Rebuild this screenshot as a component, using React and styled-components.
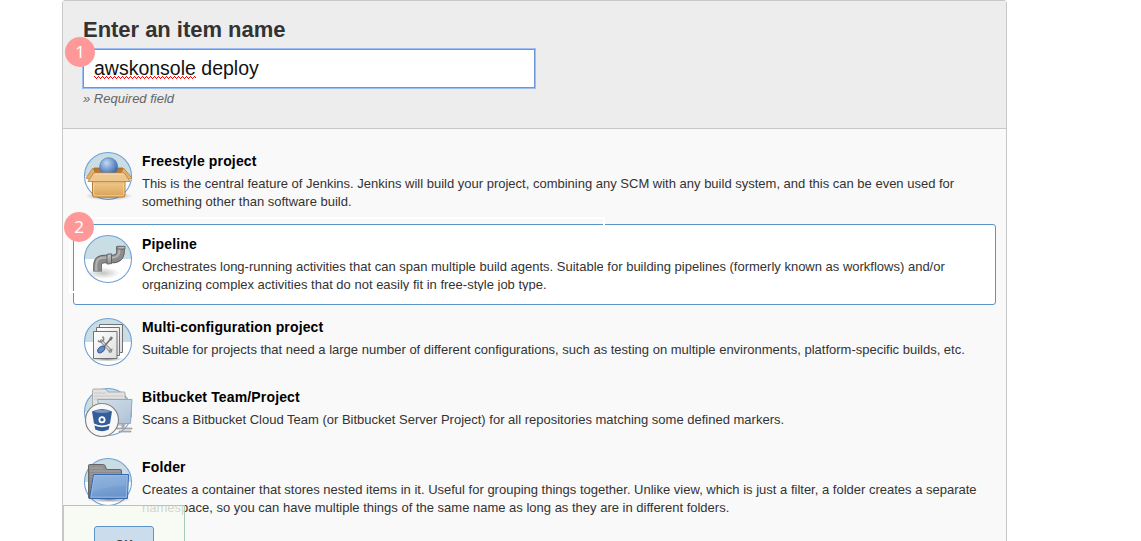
import React from 'react';
import styled, { createGlobalStyle, css } from 'styled-components';

const GlobalStyle = createGlobalStyle`
  * { box-sizing: border-box; }
  html, body { margin: 0; background: #fff; }
  body {
    height: 541px;
    overflow: hidden;
    font-family: "Liberation Sans", Arial, Helvetica, sans-serif;
    color: #333;
  }
`;

const Page = styled.main`
  height: 541px;
  overflow: hidden;
  padding-left: 62px;
`;

const Panel = styled.form`
  position: relative;
  width: 945px;
  height: 600px;
  border: 1px solid #c8c8c8;
  border-radius: 3px 3px 0 0;
  background: #f9f9f9;
`;

const Header = styled.header`
  height: 128px;
  padding: 16px 20px 0;
  background: #ededed;
  border-bottom: 1px solid #c8c8c8;
`;

const Title = styled.label`
  display: block;
  height: 32px;
  line-height: 26px;
  font-size: 22px;
  font-weight: 700;
  letter-spacing: -0.03px;
  color: #333;
`;

const NameField = styled.div`
  position: relative;
  width: 452px;
  height: 39px;
  padding-left: 10px;
  border: 1px solid #6f95d9;
  box-shadow: 0 0 0 1px #9cbff5;
  background: #fff;
  color: #111;
  font-size: 19.5px;
  line-height: 37px;
  white-space: nowrap;
`;

const Misspelled = styled.span`
  background-image:
    linear-gradient(90deg, #f00 1px, transparent 1px),
    linear-gradient(90deg, #f00 1px, transparent 1px),
    linear-gradient(90deg, #f00 1px, transparent 1px);
  background-repeat: repeat-x;
  background-size: 4px 1px, 2px 1px, 4px 1px;
  background-position: 0 calc(100% - 2px), 1px calc(100% - 1px), 2px 100%;
`;

const Hint = styled.div`
  padding: 3px 0 0 0;
  font-size: 13px;
  line-height: 15px;
  font-style: italic;
  color: #666;
`;

const List = styled.ul`
  display: flex;
  flex-direction: column;
  gap: 2px;
  margin: 0;
  padding: 12px 10px 0;
  list-style: none;
`;

const Item = styled.li`
  position: relative;
  display: flex;
  gap: 10px;
  height: ${(p) => (p.$tall ? 81 : 68)}px;
  padding: 10px 0 0 10px;
  border: 1px solid transparent;
  border-radius: 3px;
  ${(p) => p.$selected && css`
    border-color: #5c93c9;
    background: #fff;
  `}
`;

const Icon = styled.svg`
  flex: none;
  width: 48px;
  height: 48px;
  overflow: visible;
`;

const Name = styled.div`
  height: 23px;
  line-height: 18px;
  font-size: 14px;
  font-weight: 700;
  letter-spacing: 0.15px;
  color: #000;
  white-space: nowrap;
`;

const Desc = styled.div`
  line-height: 18px;
  font-size: 13px;
  color: #333;
  white-space: nowrap;
`;

const Badge = styled.span`
  position: absolute;
  z-index: 3;
  left: ${(p) => p.$x}px;
  top: ${(p) => p.$y}px;
  width: 30px;
  height: 30px;
  border-radius: 50%;
  background: #ff9999;
  color: #fff;
  font: 400 17px/29px "Open Sans", "Noto Sans", sans-serif;
  text-align: center;
`;

const Highlight = styled.span`
  position: absolute;
  z-index: 2;
  left: -5px;
  top: -8px;
  width: 536px;
  height: 76px;
  border: 2px solid #fff;
`;

const ButtonBar = styled.footer`
  position: absolute;
  z-index: 4;
  left: 0;
  top: 504px;
  width: 122px;
  height: 70px;
  padding: 20px 30px;
  border: 1px solid #a8ccb6;
  border-left-color: #b4d0be;
  background: rgba(247, 251, 242, 0.8);
`;

const OkButton = styled.button`
  display: block;
  width: 60px;
  height: 36px;
  padding: 0;
  border: 1px solid #5c93c9;
  border-radius: 3px;
  background: #cbdcec;
  color: #444;
  font: 700 12px/36px "Liberation Sans", Arial, sans-serif;
`;

const Disc = () => (
  <>
    <circle cx="24" cy="24" r="23.4" fill="#fff" />
    <path d="M.8 24a23.2 23.2 0 0 1 46.4 0z" fill="#c9dde5" />
    <circle cx="24" cy="24" r="23.5" fill="none" stroke="#6f9fd2" strokeWidth="1.1" />
  </>
);

const BoxIcon = () => (
  <Icon viewBox="0 0 48 48">
    <defs>
      <linearGradient id="card" x2="0" y2="1"><stop stopColor="#c99450" /><stop offset=".4" stopColor="#ecc382" /><stop offset="1" stopColor="#d8a256" /></linearGradient>
      <radialGradient id="ball" cx=".38" cy=".3" r=".75"><stop stopColor="#c3d9f2" /><stop offset=".55" stopColor="#6c95cb" /><stop offset="1" stopColor="#315f9f" /></radialGradient>
      <radialGradient id="shade"><stop stopColor="#444" stopOpacity=".65" /><stop offset="1" stopColor="#555" stopOpacity="0" /></radialGradient>
    </defs>
    <Disc />
    <ellipse cx="25" cy="44" rx="24" ry="4.500" fill="url(#shade)" />
    <path d="M10 16h29v9H10z" fill="#b47a35" stroke="#a06a2a" strokeWidth=".8" />
    <path d="M9 16 2 26l5 2 5-5zM39.500 16l8.500 10-5 2-7-5z" fill="#e2b26c" stroke="#b98239" strokeWidth=".8" strokeLinejoin="round" />
    <circle cx="24.700" cy="14.700" r="9" fill="url(#ball)" stroke="#4270ad" strokeWidth=".6" />
    <path d="M8.500 24h32.500v19q0 2-2 2H10.500q-2 0-2-2z" fill="url(#card)" stroke="#a97535" strokeWidth=".9" />
    <path d="M9.700 31v11.500q0 1.300 1.300 1.300h27.500q1.300 0 1.300-1.300V31" fill="none" stroke="#f5d7a4" strokeWidth=".8" />
    <path d="M9.500 21h31l5.500 8.500H4z" fill="#edc78f" stroke="#bd8945" strokeWidth=".9" strokeLinejoin="round" />
    <path d="M10.500 22h29" stroke="#fae3bd" />
  </Icon>
);

const PipeIcon = () => (
  <Icon viewBox="0 0 48 48">
    <defs>
      <linearGradient id="pipe" x2=".6" y2="1"><stop stopColor="#858585" /><stop offset=".45" stopColor="#c0c0c0" /><stop offset="1" stopColor="#707070" /></linearGradient>
    </defs>
    <Disc />
    <ellipse cx="19" cy="38" rx="17" ry="6" fill="url(#shade)" opacity=".5" />
    <path d="M13.500 36.500v-6q0-6.500 7-6.500h7q9 0 9-7.500v-5" fill="none" stroke="#5a5a5a" strokeWidth="8.600" />
    <path d="M13.500 36v-5.500q0-6.500 7-6.500h7q9 0 9-7.500V12" fill="none" stroke="#8b8b8b" strokeWidth="7" />
    <path d="M12.300 36v-6q0-7.300 7.700-7.300h7.500q7.800 0 7.800-7V12" fill="none" stroke="#b2b2b2" strokeWidth="2.200" />
    <path d="M33 11.300h8v2.700h-8zM23 19.300l4.500-.5v9.800l-4.500.5z" fill="url(#pipe)" stroke="#555" strokeWidth=".8" />
  </Icon>
);

const MatrixIcon = () => (
  <Icon viewBox="0 0 48 48">
    <defs>
      <linearGradient id="sheet" x2="1" y2="1"><stop stopColor="#fff" /><stop offset="1" stopColor="#dedede" /></linearGradient>
    </defs>
    <Disc />
    <ellipse cx="23" cy="41" rx="17" ry="2.500" fill="url(#shade)" />
    <g fill="url(#sheet)" stroke="#717171">
      <path d="M15.500 6.500h23v28h-23z" />
      <path d="M12.500 9.500h23v28h-23z" />
      <path d="M9.500 13.500h23.500v27H9.500z" />
    </g>
    <path d="m17.500 23 9 10" stroke="#858585" strokeWidth="3.200" strokeLinecap="round" />
    <path d="m17.500 23 9 10" stroke="#dfdfdf" strokeWidth="1.300" strokeLinecap="round" />
    <path d="M14 22.500q2 2.500 4.500.5t0-4.500M28.500 31.500q-3-.5-3 3" fill="none" stroke="#858585" strokeWidth="1.600" />
    <path d="m18 31 9-10.500" stroke="#727272" strokeWidth="1.600" />
    <path d="m26 22 2-3" stroke="#777" strokeWidth="2.500" />
    <ellipse cx="17.200" cy="31.500" rx="4" ry="2.600" transform="rotate(-40 17.200 31.500)" fill="#668dc5" stroke="#365d98" />
  </Icon>
);

const BitbucketIcon = () => (
  <Icon viewBox="0 0 48 48">
    <defs>
      <linearGradient id="glass" x2="1" y2="1"><stop stopColor="#d5dfe8" /><stop offset="1" stopColor="#adc2d7" /></linearGradient>
    </defs>
    <Disc />
    <path d="M8.500 2.500q0-1.500 1.500-1.500h12l2 3h16q1 0 1 1v32H8.500z" fill="#e2e2e2" stroke="#aaa" />
    <path d="M10 5h12m-12 3h29m-29 3h29" stroke="#c4c4c4" strokeWidth=".8" />
    <path d="M13.500 11.500h34.500l-1.500 24H20z" fill="url(#glass)" stroke="#94a9bf" />
    <path d="M32 40h16v1H32zM35 43h12v1H35z" fill="#bbb" stroke="#999" strokeWidth=".7" />
    <path d="M39 36v4" stroke="#aaa" strokeWidth="3" />
    <circle cx="18" cy="32" r="16.500" fill="#f8f8f8" stroke="#858585" strokeWidth="1.200" />
    <path d="M8 23.500q10-5 20 0l-2 12q-8 4-16 0z" fill="#345e98" />
    <ellipse cx="18" cy="23.300" rx="7.800" ry="1.600" fill="#7897be" />
    <path d="M10.500 37.500q7.500 3.500 15 0l-.8 4q-6.700 3.500-13.400 0z" fill="#345e98" />
    <circle cx="18" cy="31.700" r="2.600" fill="#345e98" stroke="#fff" strokeWidth="1.800" />
  </Icon>
);

const FolderIcon = () => (
  <Icon viewBox="0 0 48 48">
    <defs>
      <linearGradient id="blue" x2=".3" y2="1"><stop stopColor="#8fb3df" /><stop offset="1" stopColor="#6b96cc" /></linearGradient>
      <linearGradient id="grey" x2="0" y2="1"><stop stopColor="#949494" /><stop offset="1" stopColor="#6c6c6c" /></linearGradient>
    </defs>
    <Disc />
    <ellipse cx="25" cy="41.500" rx="22" ry="3" fill="url(#shade)" />
    <path d="M4.500 7.500q0-1 1-1h14q1 0 1.500 1l1.500 4H36.500q1 0 1 1V40.500H5.500q-1 0-1-1z" fill="url(#grey)" stroke="#666" />
    <path d="M6 10h13m-13 3h30m-30 3h30m-30 3h4m-4 3h4m-4 3h3m-3 3h3m-3 3h3" stroke="#adadad" strokeWidth=".8" />
    <path d="M9.500 16.500h35l-1 24H5.500z" fill="url(#blue)" stroke="#3767ac" strokeLinejoin="round" />
    <path d="M10.500 17.700h32.700l-.8 21.500H7z" fill="none" stroke="#a6c3e8" strokeWidth=".7" />
    <path d="M10 18.500h32l-.4 9Q24 28 9 34z" fill="#9bbbe2" opacity=".3" />
  </Icon>
);

const projects = [
  {
    name: 'Freestyle project', Art: BoxIcon, tall: true,
    lines: ['This is the central feature of Jenkins. Jenkins will build your project, combining any SCM with any build system, and this can be even used for', 'something other than software build.'],
  },
  {
    name: 'Pipeline', Art: PipeIcon, tall: true, selected: true,
    lines: ['Orchestrates long-running activities that can span multiple build agents. Suitable for building pipelines (formerly known as workflows) and/or', 'organizing complex activities that do not easily fit in free-style job type.'],
  },
  {
    name: 'Multi-configuration project', Art: MatrixIcon,
    lines: ['Suitable for projects that need a large number of different configurations, such as testing on multiple environments, platform-specific builds, etc.'],
  },
  {
    name: 'Bitbucket Team/Project', Art: BitbucketIcon,
    lines: ['Scans a Bitbucket Cloud Team (or Bitbucket Server Project) for all repositories matching some defined markers.'],
  },
  {
    name: 'Folder', Art: FolderIcon, tall: true,
    lines: ['Creates a container that stores nested items in it. Useful for grouping things together. Unlike view, which is just a filter, a folder creates a separate', 'namespace, so you can have multiple things of the same name as long as they are in different folders.'],
  },
];

export default function App() {
  return (
    <>
      <GlobalStyle />
      <Page>
        <Panel>
          <Header>
            <Title>Enter an item name</Title>
            <NameField>
              <Misspelled>awskonsole</Misspelled> deploy
              <Badge $x={-19} $y={-13}>1</Badge>
            </NameField>
            <Hint>» Required field</Hint>
          </Header>
          <List>
            {projects.map(({ name, Art, tall, selected, lines }) => (
              <Item key={name} $tall={tall} $selected={selected}>
                <Art />
                <div>
                  <Name>{name}</Name>
                  {lines.map((line) => <Desc key={line}>{line}</Desc>)}
                </div>
                {selected && <Highlight />}
                {selected && <Badge $x={-10} $y={-13}>2</Badge>}
              </Item>
            ))}
          </List>
          <ButtonBar><OkButton type="button">OK</OkButton></ButtonBar>
        </Panel>
      </Page>
    </>
  );
}
